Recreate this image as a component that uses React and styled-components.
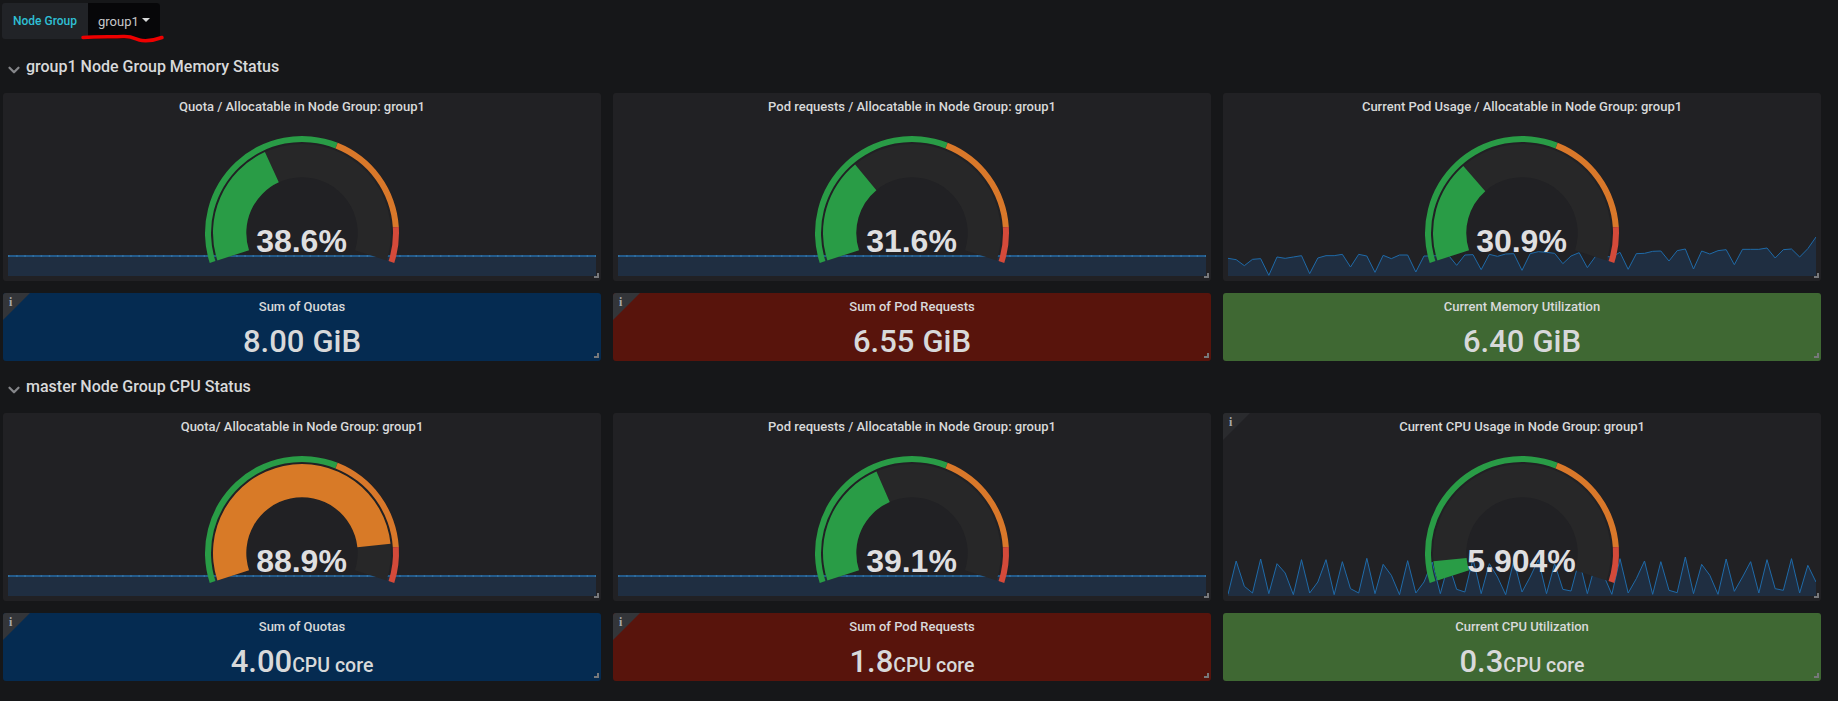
import React from 'react'
import styled, { createGlobalStyle } from 'styled-components'
import { ChevronDown } from 'lucide-react'

const GlobalStyle = createGlobalStyle`
  html, body {
    margin: 0;
    background: #161719;
    color: #d8d9da;
    font-family: Roboto, "Liberation Sans", sans-serif;
  }
`

const Page = styled.div`
  width: 1838px;
  height: 701px;
  overflow: hidden;
  box-sizing: border-box;
  padding: 3px 0 0 3px;
`

const TopBar = styled.div`
  position: relative;
  display: flex;
  width: 158px;
  height: 36px;
  margin: 0 0 2px -1px;
  border-radius: 3px;
  background: #212327;
`

const VarLabel = styled.div`
  display: flex;
  align-items: center;
  width: 86px;
  box-sizing: border-box;
  padding-left: 11px;
  font-size: 12px;
  font-weight: 500;
  color: #2fbfd4;
`

const VarValue = styled.div`
  display: flex;
  align-items: center;
  gap: 3px;
  width: 72px;
  box-sizing: border-box;
  padding-left: 10px;
  border-radius: 0 3px 3px 0;
  background: #070709;
  font-size: 13px;
  color: #c7c8ca;
`

const Caret = styled.span`
  width: 0;
  height: 0;
  margin-bottom: 2px;
  border-left: 4px solid transparent;
  border-right: 4px solid transparent;
  border-top: 4px solid #d8d9da;
`

const Scribble = styled.svg`
  position: absolute;
  left: 80px;
  top: -3px;
  overflow: visible;
`

const RowHeader = styled.div`
  display: flex;
  align-items: center;
  gap: 3px;
  height: 50px;
  padding-bottom: 2px;
  margin-left: 2px;
  font-size: 16px;
  font-weight: 500;
  color: #d8d9da;

  svg {
    margin-top: 8px;
    color: #85868a;
  }
`

const Grid = styled.div`
  display: grid;
  grid-template-columns: repeat(3, 598px);
  grid-template-rows: 188px 68px;
  gap: 12px;
`

const Panel = styled.div`
  position: relative;
  display: flex;
  flex-direction: column;
  overflow: hidden;
  border-radius: 3px;
  background: ${p => p.$bg || '#212124'};
`

const PanelTitle = styled.div`
  flex: none;
  height: 27px;
  line-height: 27px;
  text-align: center;
  font-size: 13px;
  font-weight: 500;
  color: #d8d9da;
`

const ChartStack = styled.div`
  flex: 1;
  display: grid;
  grid-template: 1fr / 1fr;

  & > * {
    grid-area: 1 / 1;
  }
`

const Spark = styled.svg`
  align-self: end;
  display: block;
  width: 588px;
  height: 50px;
  margin: 0 5px 5px;
`

const GaugeSvg = styled.svg`
  justify-self: center;
  align-self: start;
  display: block;
  margin-top: 13px;
`

const GaugeValue = styled.div`
  justify-self: center;
  align-self: start;
  margin: 105px 1px 0 0;
  line-height: 32px;
  font-family: "Liberation Sans", Arial, sans-serif;
  font-size: 32px;
  font-weight: 700;
  color: #dfdfe0;
`

const StatValue = styled.div`
  display: flex;
  justify-content: center;
  align-items: baseline;
  height: 40px;
  line-height: 40px;
  margin-top: 2px;
  font-size: 31px;
  font-weight: 500;
  color: #d8d9da;
`

const StatUnit = styled.span`
  margin-left: ${p => (p.$spaced ? '8px' : '0')};
  font-size: ${p => (p.$spaced ? '31px' : '19.5px')};
`

const Corner = styled.div`
  position: absolute;
  left: 0;
  top: 0;
  width: 27px;
  height: 27px;
  clip-path: polygon(0 0, 100% 0, 0 100%);
  background: ${p => p.$bg || '#333539'};
`

const CornerIcon = styled.span`
  position: absolute;
  left: 6px;
  top: 3px;
  font-family: "Liberation Serif", serif;
  font-size: 12px;
  font-weight: 700;
  line-height: 12px;
  color: #a8a9ab;
`

const ResizeHandle = styled.span`
  position: absolute;
  right: 2px;
  bottom: 3px;
  width: 3px;
  height: 3px;
  border-right: 2px solid #77787b;
  border-bottom: 2px solid #77787b;
`

const polar = (r, deg) => {
  const a = (deg * Math.PI) / 180
  return [r * Math.sin(a), -r * Math.cos(a)]
}

const arcPath = (r0, r1, from, to) => {
  const large = to - from > 180 ? 1 : 0
  const [x0, y0] = polar(r1, from)
  const [x1, y1] = polar(r1, to)
  const [x2, y2] = polar(r0, to)
  const [x3, y3] = polar(r0, from)
  return `M${x0} ${y0}A${r1} ${r1} 0 ${large} 1 ${x1} ${y1}L${x2} ${y2}A${r0} ${r0} 0 ${large} 0 ${x3} ${y3}Z`
}

// gauge sweeps 216deg, -108 to 108 measured from straight up
const pctToDeg = pct => -108 + (pct / 100) * 216

const Gauge = ({ percent, color }) => (
  <GaugeSvg width='200' height='140' viewBox='-100 -100 200 140'>
    <path d={arcPath(55.7, 89, -108, 108)} fill='#272728' />
    <path d={arcPath(55.7, 89, -108, pctToDeg(percent))} fill={color} />
    <path d={arcPath(91, 97, -108, pctToDeg(60))} fill='#299c46' />
    <path d={arcPath(91, 97, pctToDeg(60), pctToDeg(90))} fill='#d9782a' />
    <path d={arcPath(91, 97, pctToDeg(90), 108)} fill='#d44a3a' />
  </GaugeSvg>
)

// y values read off the reference, in 1/3 px, bottom of the plot at 587
const memorySeries = [534, 538, 556, 537, 535, 585, 530, 534, 530, 526, 580, 533, 526, 526, 522, 560, 522, 527, 576, 525, 535, 524, 524, 575, 527, 527, 525, 525, 555, 524, 523, 568, 522, 528, 521, 520, 570, 520, 514, 516, 519, 550, 527, 517, 562, 528, 528, 530, 516, 567, 520, 519, 513, 512, 542, 511, 506, 566, 512, 521, 511, 508, 553, 507, 507, 507, 503, 533, 508, 506, 530, 505, 470]
const cpuSeries = [582, 482, 558, 578, 476, 580, 490, 518, 583, 478, 578, 545, 478, 583, 484, 565, 578, 474, 580, 492, 525, 583, 481, 578, 545, 485, 580, 490, 567, 575, 475, 580, 490, 530, 583, 480, 575, 530, 478, 580, 490, 567, 572, 480, 580, 490, 525, 582, 475, 578, 535, 482, 582, 484, 570, 577, 470, 580, 492, 525, 582, 476, 573, 530, 484, 578, 478, 565, 570, 475, 578, 495, 545]

const Sparkline = ({ series }) => {
  const line = series
    ? series.map((y, i) => `${(i * 588) / (series.length - 1)},${50 - (587 - y) / 3}`).join(' ')
    : '0,30 588,30'
  return (
    <Spark viewBox='0 0 588 50'>
      <polygon points={`0,50 ${line} 588,50`} fill='#1f2e41' />
      <polyline points={line} fill='none' stroke={series ? '#1f6aa8' : '#235a8a'} strokeWidth={series ? 1 : 2} />
      {!series && <polyline points={line} fill='none' stroke='#34709f' strokeWidth='2' strokeDasharray='1.5 6.65' />}
    </Spark>
  )
}

const GaugePanel = ({ title, value, percent, color = '#299c46', series, info }) => (
  <Panel>
    {info && <Corner $bg='#2a2b2e'><CornerIcon>i</CornerIcon></Corner>}
    <PanelTitle>{title}</PanelTitle>
    <ChartStack>
      <Sparkline series={series} />
      <Gauge percent={percent} color={color} />
      <GaugeValue>{value}</GaugeValue>
    </ChartStack>
    <ResizeHandle />
  </Panel>
)

const StatPanel = ({ title, value, unit, bg, info, spaced }) => (
  <Panel $bg={bg}>
    {info && <Corner><CornerIcon>i</CornerIcon></Corner>}
    <PanelTitle>{title}</PanelTitle>
    <StatValue>
      {value}
      <StatUnit $spaced={spaced}>{unit}</StatUnit>
    </StatValue>
    <ResizeHandle />
  </Panel>
)

const BLUE = '#052b51'
const RED = '#58140c'
const GREEN = '#3f6833'
const ORANGE = '#d87a27'

const App = () => (
  <Page>
    <GlobalStyle />
    <TopBar>
      <VarLabel>Node Group</VarLabel>
      <VarValue>group1<Caret /></VarValue>
      <Scribble width='84' height='45' viewBox='0 0 84 45'>
        <path
          d='M1 37.5 C 15 36.5, 30 37, 41 36.5 S 54 40, 60 40.5 S 72 40.5, 80 37.5'
          fill='none'
          stroke='#ee0000'
          strokeWidth='3.5'
          strokeLinecap='round'
        />
      </Scribble>
    </TopBar>

    <RowHeader><ChevronDown size={18} strokeWidth={3} />group1 Node Group Memory Status</RowHeader>
    <Grid>
      <GaugePanel title='Quota / Allocatable in Node Group: group1' value='38.6%' percent={38.6} />
      <GaugePanel title='Pod requests / Allocatable in Node Group: group1' value='31.6%' percent={31.6} />
      <GaugePanel title='Current Pod Usage / Allocatable in Node Group: group1' value='30.9%' percent={30.9} series={memorySeries} />
      <StatPanel title='Sum of Quotas' value='8.00' unit='GiB' spaced bg={BLUE} info />
      <StatPanel title='Sum of Pod Requests' value='6.55' unit='GiB' spaced bg={RED} info />
      <StatPanel title='Current Memory Utilization' value='6.40' unit='GiB' spaced bg={GREEN} />
    </Grid>

    <RowHeader><ChevronDown size={18} strokeWidth={3} />master Node Group CPU Status</RowHeader>
    <Grid>
      <GaugePanel title='Quota/ Allocatable in Node Group: group1' value='88.9%' percent={88.9} color={ORANGE} />
      <GaugePanel title='Pod requests / Allocatable in Node Group: group1' value='39.1%' percent={39.1} />
      <GaugePanel title='Current CPU Usage in Node Group: group1' value='5.904%' percent={5.904} series={cpuSeries} info />
      <StatPanel title='Sum of Quotas' value='4.00' unit='CPU core' bg={BLUE} info />
      <StatPanel title='Sum of Pod Requests' value='1.8' unit='CPU core' bg={RED} info />
      <StatPanel title='Current CPU Utilization' value='0.3' unit='CPU core' bg={GREEN} />
    </Grid>
  </Page>
)

export default App
